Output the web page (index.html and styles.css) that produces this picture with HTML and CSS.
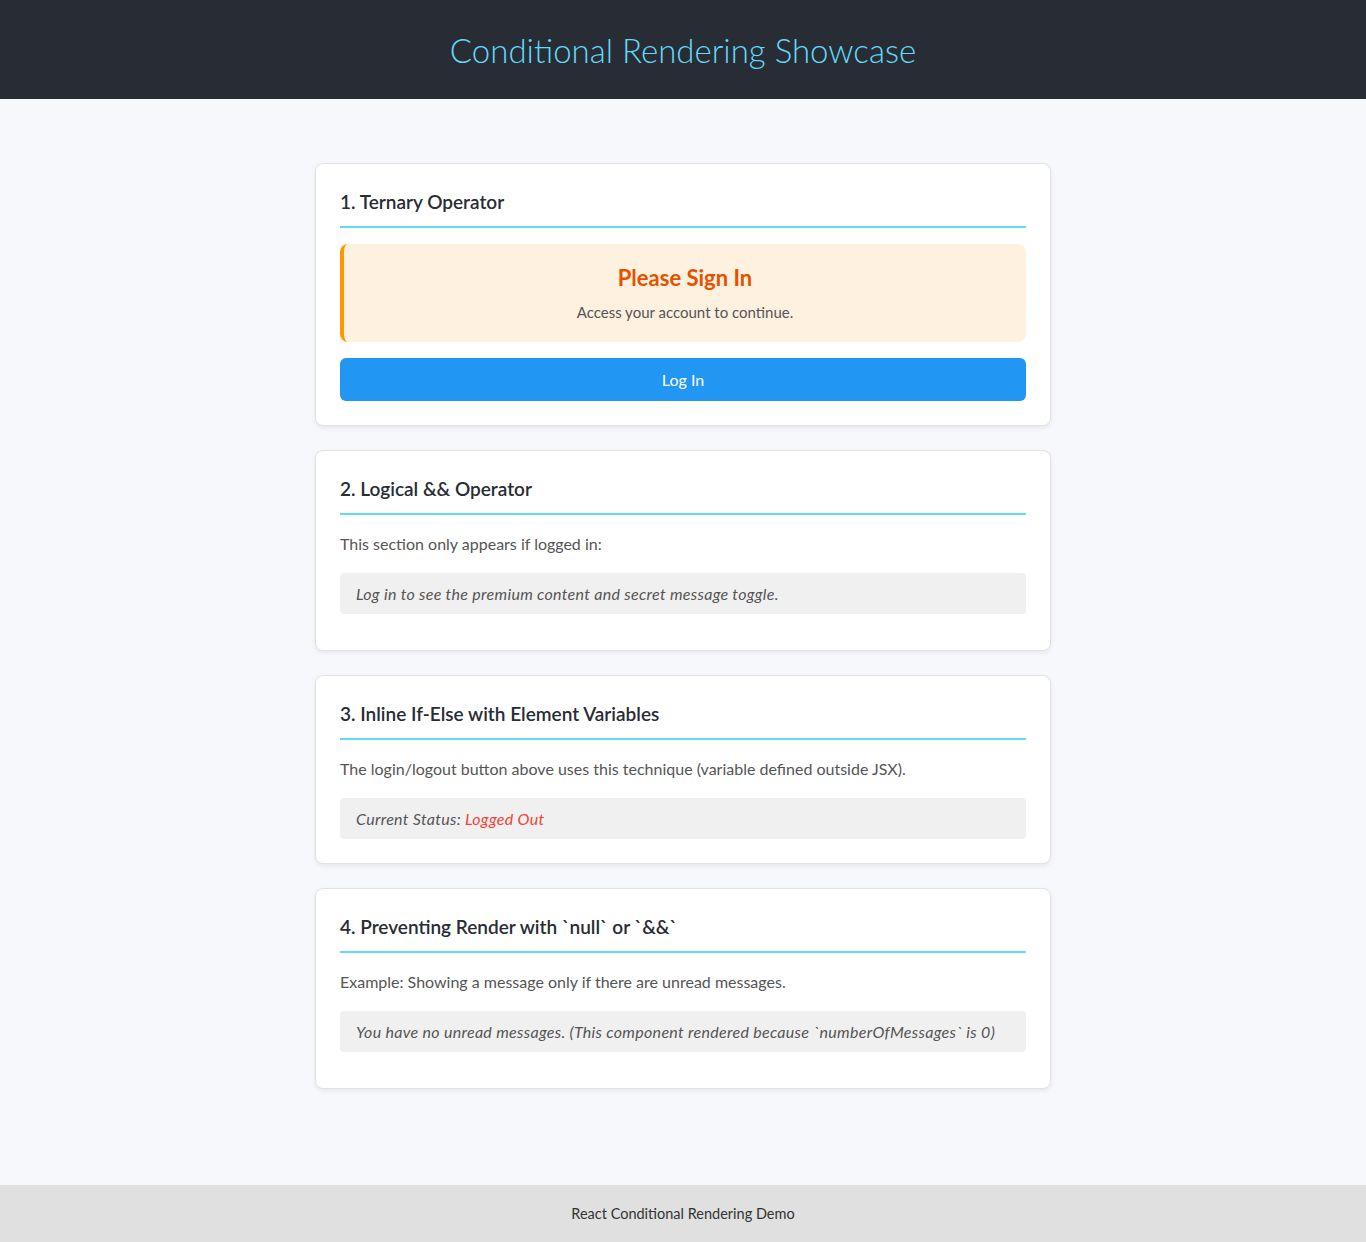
FILE: index.html
```html
<!DOCTYPE html>
<html lang="en">
<head>
<meta charset="utf-8">
<title>Conditional Rendering Showcase</title>
<link rel="stylesheet" href="styles.css">
</head>
<body>
<div class="app">
  <header class="app-header">
    <h1>Conditional Rendering Showcase</h1>
  </header>
  <main class="app-main">
    <section class="card">
      <h2>1. Ternary Operator</h2>
      <div class="notice">
        <h3>Please Sign In</h3>
        <p>Access your account to continue.</p>
      </div>
      <button class="btn">Log In</button>
    </section>
    <section class="card">
      <h2>2. Logical &amp;&amp; Operator</h2>
      <p class="text">This section only appears if logged in:</p>
      <div class="muted-box">Log in to see the premium content and secret message toggle.</div>
      <div class="spacer"></div>
    </section>
    <section class="card">
      <h2>3. Inline If-Else with Element Variables</h2>
      <p class="text">The login/logout button above uses this technique (variable defined outside JSX).</p>
      <div class="muted-box">Current Status: <span class="status-out">Logged Out</span></div>
    </section>
    <section class="card">
      <h2>4. Preventing Render with `null` or `&amp;&amp;`</h2>
      <p class="text">Example: Showing a message only if there are unread messages.</p>
      <div class="muted-box">You have no unread messages. (This component rendered because `numberOfMessages` is 0)</div>
      <div class="spacer"></div>
    </section>
  </main>
  <footer class="app-footer">React Conditional Rendering Demo</footer>
</div>
</body>
</html>
```
FILE: styles.css
```css
* { box-sizing: border-box; }
html, body { margin: 0; padding: 0; }
body {
  font-family: "Lato", "Open Sans", "Noto Sans", sans-serif;
  background: #f7f8fb;
  color: #333;
}
.app { min-height: 1242px; display: flex; flex-direction: column; }
.app-header {
  background: #282c34;
  height: 99px;
  display: flex;
  align-items: center;
  justify-content: center;
  padding-top: 2px;
}
.app-header h1 {
  margin: 0;
  font-size: 33px;
  font-weight: 300;
  color: #61dafb;
  line-height: 1;
}
.app-main {
  flex: 1;
  width: 736px;
  margin: 0 auto;
  padding: 64px 0 94px;
  display: flex;
  flex-direction: column;
  gap: 24px;
}
.card {
  background: #fff;
  border: 1px solid #e2e2e2;
  border-radius: 8px;
  padding: 24px;
  box-shadow: 0 2px 5px rgba(0,0,0,0.07);
}
.card h2 {
  margin: 0 0 16px;
  font-size: 19px;
  font-weight: 600;
  color: #282c34;
  line-height: 27px;
  padding-bottom: 11px;
  border-bottom: 2px solid #61dafb;
}
.notice {
  background: #fff1df;
  border-left: 4px solid #ff9800;
  border-radius: 8px;
  padding: 20px;
  text-align: center;
  margin-bottom: 16px;
}
.notice h3 {
  margin: 0 0 11px;
  font-size: 22px;
  font-weight: 700;
  color: #e65100;
  line-height: 28px;
}
.notice p {
  margin: 0;
  font-size: 15px;
  color: #555;
  line-height: 19px;
}
.btn {
  display: block;
  width: 100%;
  height: 43px;
  border: none;
  border-radius: 6px;
  background: #2196f3;
  color: #fff;
  font-family: inherit;
  font-size: 16px;
}
.text {
  margin: 0 0 17px;
  padding-top: 1px;
  font-size: 16px;
  line-height: 24px;
  color: #555;
}
.muted-box {
  background: #f0f0f0;
  border-radius: 4px;
  padding: 10px 16px;
  font-size: 16px;
  letter-spacing: 0.3px;
  line-height: 21px;
  font-style: italic;
  color: #555;
}
.status-out { color: #f44336; }
.spacer { height: 12px; }
.app-footer {
  background: #e0e0e0;
  height: 57px;
  display: flex;
  align-items: center;
  justify-content: center;
  font-size: 14.5px;
  color: #333;
}
```
